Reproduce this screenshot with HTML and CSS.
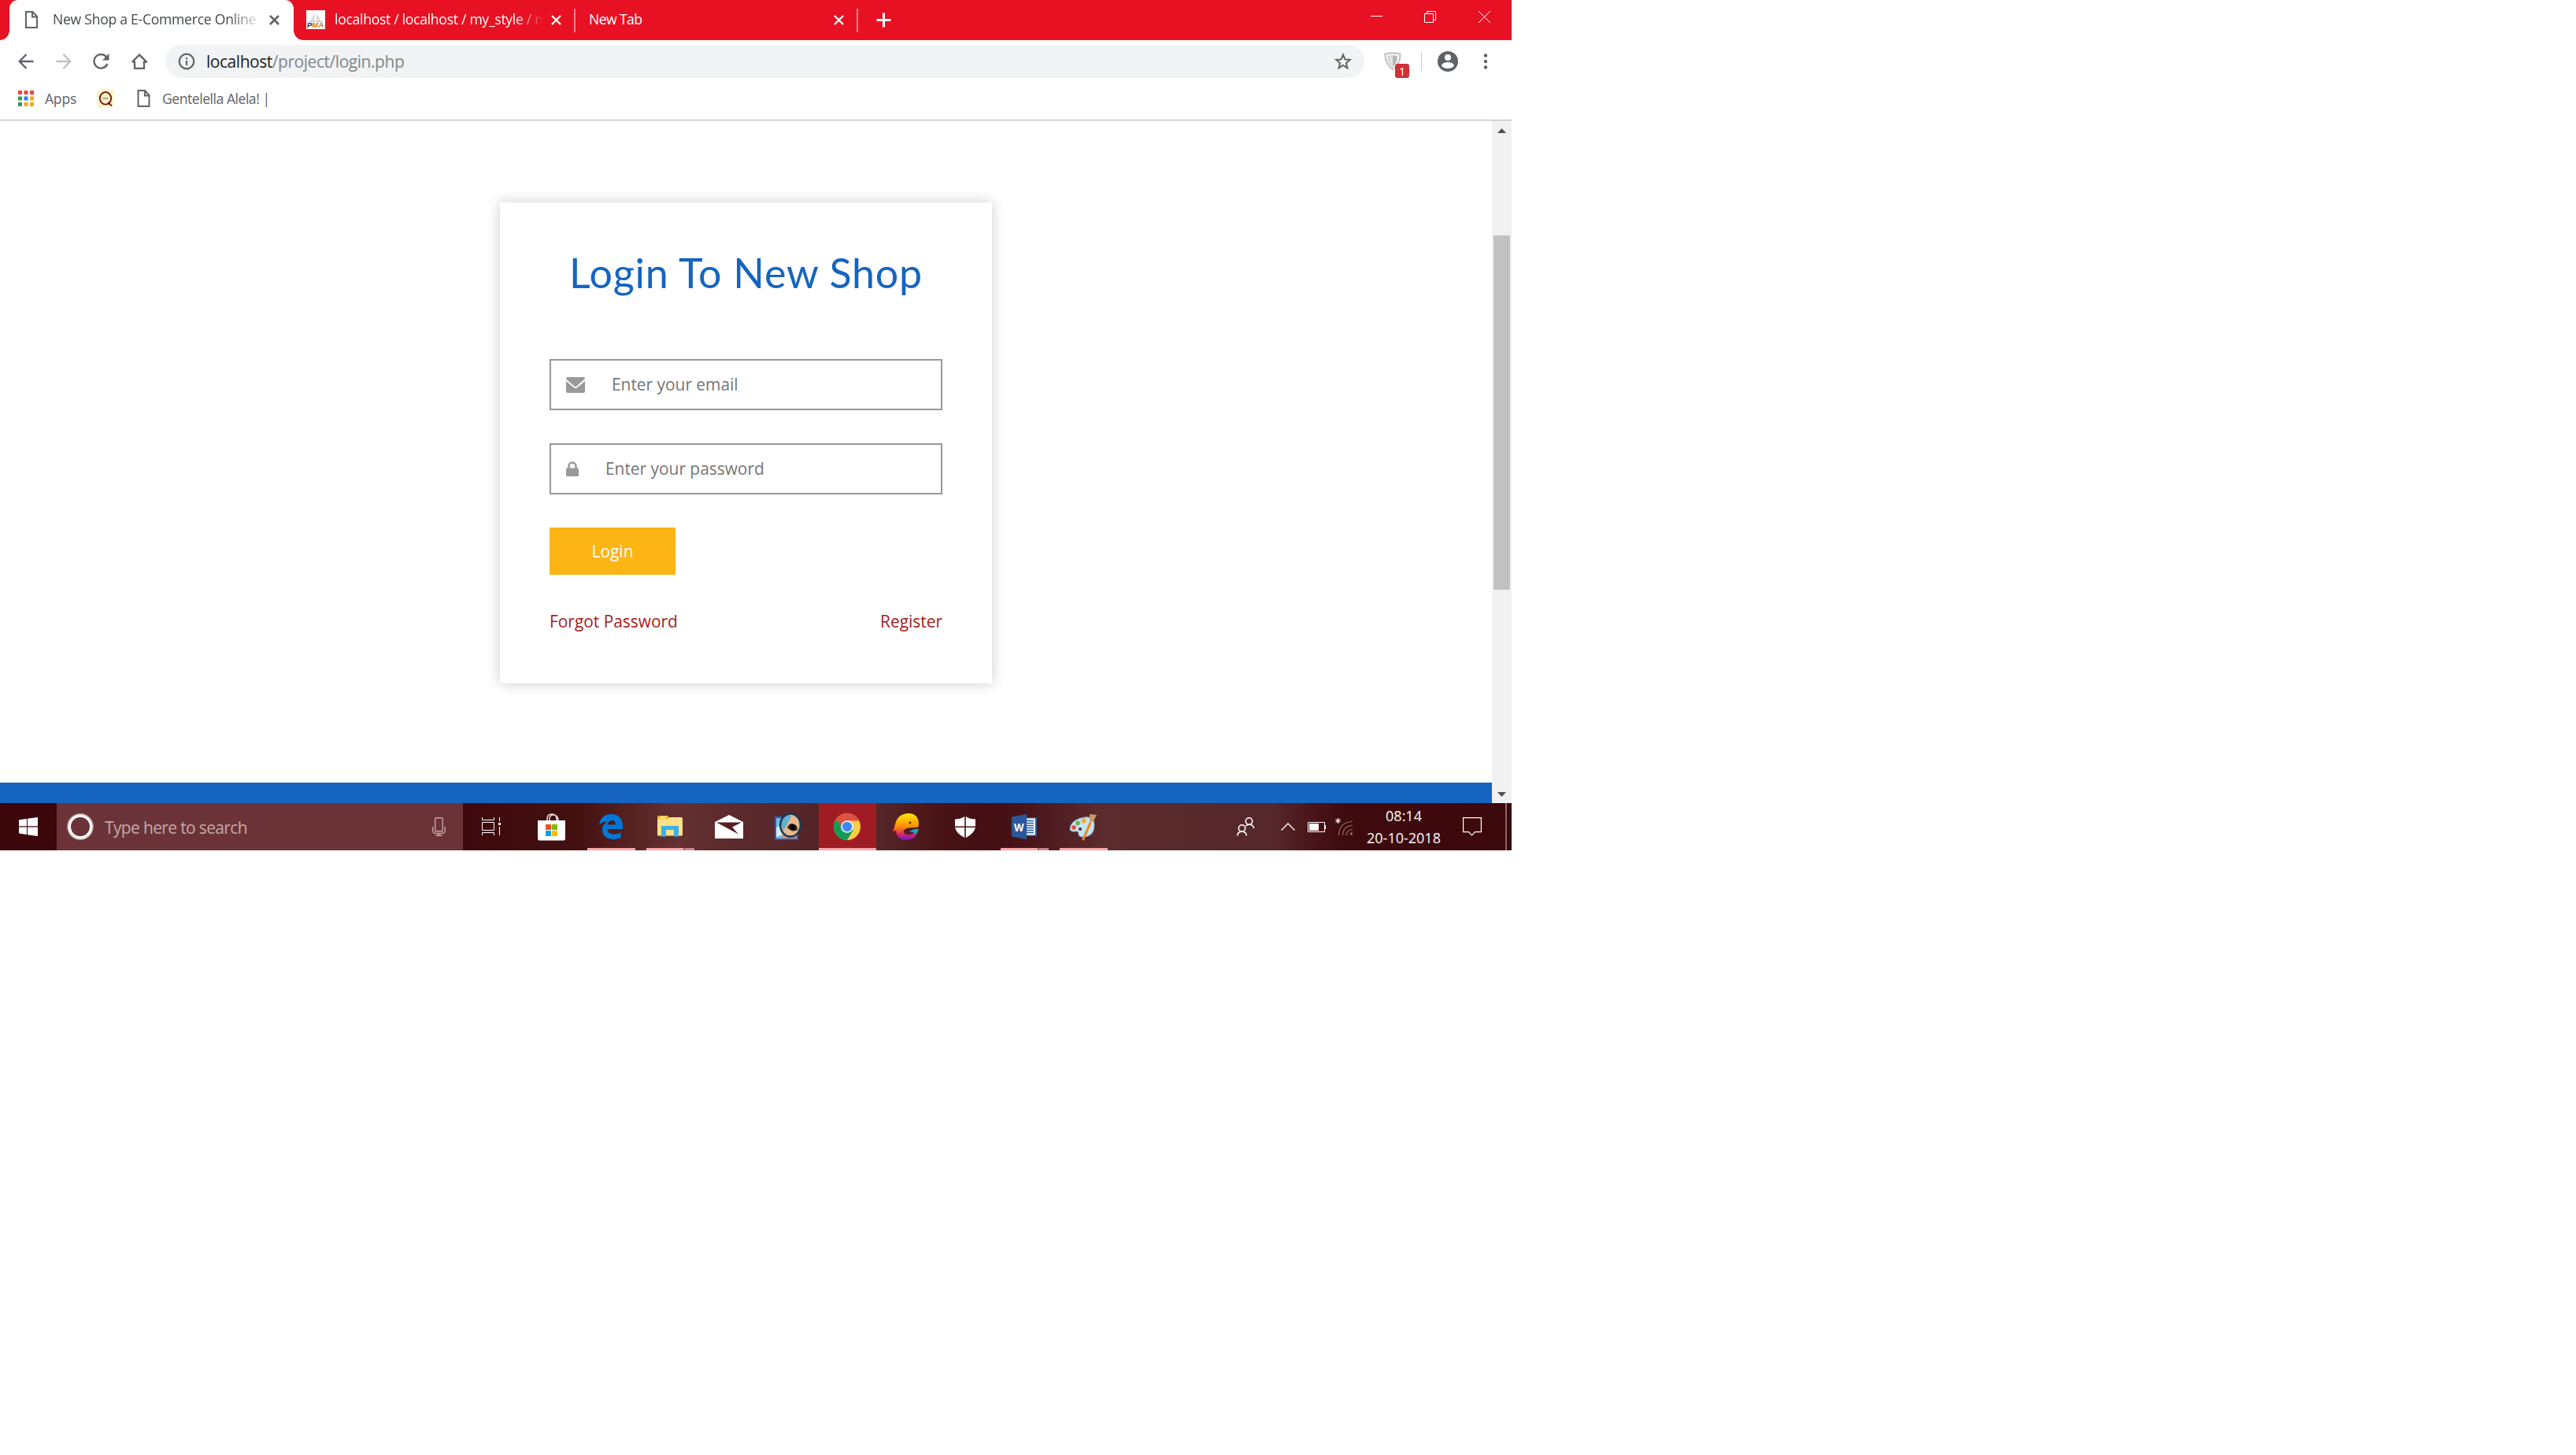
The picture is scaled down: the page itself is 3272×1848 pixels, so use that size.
FILE: index.html
```html
<!DOCTYPE html>
<html lang="en">
<head>
<meta charset="utf-8">
<title>New Shop a E-Commerce Online</title>
<link rel="stylesheet" href="styles.css">
</head>
<body>
<div class="desktop">
  <header class="tabstrip">
    <div class="tab tab-active">
      <svg class="tab-icon" width="24" height="24" viewBox="0 0 24 24" fill="none" stroke="#5f6368" stroke-width="2"><path d="M5 2h8.500l5.500 6v14H5zM13 2.500V8.500h5.500"/></svg>
      <span class="tab-title t1">New Shop a E-Commerce Online</span>
      <svg class="tab-close" width="13" height="13" viewBox="0 0 13 13" stroke="#5f6368" stroke-width="2.600"><path d="M1 1l11 11M12 1L1 12"/></svg>
    </div>
    <div class="tab tab-second">
      <svg class="tab-icon" width="24" height="24" viewBox="0 0 24 24"><path fill="#fff" d="M0 0h24v24H0z"/><path fill="#ddd" d="M10 2l1 13H3q5-5 7-13zM13 4q5 6 6 12l-6-1z"/><path fill="#c4c4c4" d="M2 14h20l-2 1H3z"/><text x="1" y="22" font-family="Liberation Sans" font-weight="bold" font-style="italic" font-size="8.500" textLength="21" lengthAdjust="spacingAndGlyphs" fill="#222b45">P<tspan fill="#d07a10">MA</tspan></text></svg>
      <span class="tab-title t2">localhost / localhost / my_style / n</span>
      <svg class="tab-close" width="13" height="13" viewBox="0 0 13 13" stroke="#fff" stroke-width="2.400"><path d="M1 1l11 11M12 1L1 12"/></svg>
    </div>
    <div class="tab tab-third">
      <span class="tab-title t3">New Tab</span>
      <svg class="tab-close" width="13" height="13" viewBox="0 0 13 13" stroke="#fff" stroke-width="2.400"><path d="M1 1l11 11M12 1L1 12"/></svg>
    </div>
    <svg class="tab-new" width="19" height="19" viewBox="0 0 19 19" stroke="#fff" stroke-width="3"><path d="M9.500 0.500v18M0.500 9.500h18"/></svg>
    <div class="window-buttons">
      <svg width="16" height="15" viewBox="0 0 16 15" stroke="#fff"><path d="M1 6.500h15"/></svg>
      <svg width="15" height="15" viewBox="0 0 15 15" stroke="#fff" fill="none"><path d="M.5 3.500h11v11H.5zM3.500 3.500V.5h11v11h-3"/></svg>
      <svg width="15" height="15" viewBox="0 0 15 15" stroke="#fff"><path d="M0 0l15 15M15 0L0 15"/></svg>
    </div>
  </header>

  <div class="toolbar">
    <div class="nav-buttons">
      <svg width="20" height="20" viewBox="0 0 20 20" fill="none" stroke="#5f6368" stroke-width="2.300"><path d="M19.500 10H2M10.500 1L1.700 10l8.800 9"/></svg>
      <svg width="20" height="20" viewBox="0 0 20 20" fill="none" stroke="#bdbfc1" stroke-width="2.300"><path d="M.5 10H18M9.500 1l8.800 9-8.800 9"/></svg>
      <svg width="21" height="20" viewBox="0 0 21 20" fill="none" stroke="#5f6368" stroke-width="2.300"><path d="M17.500 4.800A8.800 8.800 0 1 0 18.500 13"/><path d="M20.500 0v8.500H12z" fill="#5f6368" stroke="none"/></svg>
      <svg width="20" height="20" viewBox="0 0 20 20" fill="none" stroke="#5f6368" stroke-width="2.300"><path d="M4 9.500V18.800h12V9.500M1 10.500L10 1.600l9 8.900H16M1 10.500h3"/></svg>
    </div>
    <div class="omnibox">
      <svg width="22" height="22" viewBox="0 0 22 22" fill="none" stroke="#5f6368" stroke-width="2.200"><circle cx="11" cy="11" r="9.300"/><path d="M11 10v6M11 6v2.300"/></svg>
      <span class="url"><b>localhost</b>/project/login.php</span>
      <svg class="star" width="22" height="22" viewBox="0 0 22 22" fill="none" stroke="#5f6368" stroke-width="2"><path d="M11 2.500l2.400 5.900 6.400.5-4.900 4.100 1.500 6.300L11 16l-5.400 3.300 1.500-6.300L2.200 8.900l6.400-.5z"/></svg>
    </div>
    <div class="extension">
      <svg width="22" height="24" viewBox="0 0 22 24"><path d="M1.500 2.500Q11 .5 20.500 2.500q0 13-9.500 19.500Q1.500 15.500 1.500 2.500z" fill="#fff" stroke="#c8c8c8" stroke-width="2.500"/><path d="M5.500 5.500Q11 4 16.500 5.500q0 8.500-5.500 13Q5.500 14 5.500 5.500z" fill="#e3e3e3" stroke="#bbb"/><path d="M11 5v13q5-4.500 5-12z" fill="#b5b5b5"/></svg>
      <span class="badge">1</span>
    </div>
    <i class="toolbar-rule"></i>
    <svg class="avatar" width="26" height="26" viewBox="0 0 26 26"><circle cx="13" cy="13" r="13" fill="#5f6368"/><circle cx="13" cy="8" r="4" fill="#fff"/><ellipse cx="13" cy="18" rx="7.800" ry="4" fill="#fff"/></svg>
    <svg class="menu" width="6" height="20" viewBox="0 0 6 20" fill="#5f6368"><circle cx="3" cy="2.500" r="2.200"/><circle cx="3" cy="10" r="2.200"/><circle cx="3" cy="17.500" r="2.200"/></svg>
  </div>

  <div class="bookmarks">
    <svg width="20" height="20" viewBox="0 0 20 20"><path fill="#f44336" d="M0 0h5v5H0zM7.500 0h5v5h-5zM15 0h5v5h-5z"/><path fill="#34a058" d="M0 7.500h5v5H0zM0 15h5v5H0z"/><path fill="#1e88f5" d="M7.500 7.500h5v5h-5z"/><path fill="#f7a813" d="M15 7.500h5v5h-5zM7.500 15h5v5h-5zM15 15h5v5h-5z"/></svg>
    <span class="apps">Apps</span>
    <svg class="quick" width="24" height="24" viewBox="0 0 24 24"><path fill="#fdf6c4" d="M1 2l22-2-1 22L2 24z"/><ellipse cx="12" cy="11.800" rx="7.200" ry="7.800" fill="none" stroke="#7b1216" stroke-width="1.900"/><path d="M15 17l5 4.500" stroke="#7b1216" stroke-width="1.800"/><path d="M8.500 12h7" stroke="#b9b08a" stroke-width="2.500"/></svg>
    <svg class="page" width="17" height="22" viewBox="0 0 17 22" fill="none" stroke="#5f6368" stroke-width="2"><path d="M1.500 1H10l5.500 6v14h-14zM10 1.500V7.500h5.500"/></svg>
    <span class="gent">Gentelella Alela! |</span>
  </div>

  <div class="viewport">
    <main class="page-area">
      <section class="login-card">
        <h1>Login To New Shop</h1>
        <div class="field">
          <svg width="24" height="20" viewBox="0 0 24 20" fill="#999"><path d="M2 0h20q2 0 2 2L13.500 11.500q-1.500 1.200-3 0L0 2.500Q0 0 2 0z"/><path d="M0 5l9.500 8q2.500 2 5 0L24 5v13q0 2-2 2H2q-2 0-2-2z"/></svg>
          <span class="email">Enter your email</span>
        </div>
        <div class="field">
          <svg width="16" height="19" viewBox="0 0 16 19"><path d="M3.500 9V6a4.500 4.500 0 0 1 9 0v3" fill="none" stroke="#999" stroke-width="2.600"/><rect y="8.500" width="16" height="10.500" rx="1.500" fill="#999"/></svg>
          <span class="pass">Enter your password</span>
        </div>
        <div class="login-button"><span>Login</span></div>
        <div class="links"><a class="forgot">Forgot Password</a><a class="register">Register</a></div>
      </section>
      <div class="footer-band"></div>
    </main>
    <aside class="scrollbar">
      <svg width="11" height="6" viewBox="0 0 11 6"><path fill="#505050" d="M0 6L5.500 0 11 6z"/></svg>
      <div class="thumb"></div>
      <svg width="11" height="6" viewBox="0 0 11 6"><path fill="#505050" d="M0 0h11L5.500 6z"/></svg>
    </aside>
  </div>

  <footer class="taskbar">
    <div class="start"><svg width="24" height="24" viewBox="0 0 24 24" fill="#fff"><path d="M0 3.300l10-1.400V11.300H0zM11 1.700L24 0v11.300H11zM0 12.400h10v9.500L0 20.600zM11 12.400h13V24l-13-1.800z"/></svg></div>
    <div class="search">
      <svg width="34" height="34" viewBox="0 0 34 34" fill="none"><circle cx="17" cy="17" r="14.400" stroke="#b99a9c" stroke-width="5"/><circle cx="17" cy="17" r="13.800" stroke="#fff" stroke-width="3.200"/></svg>
      <span class="hint">Type here to search</span>
      <svg class="mic" width="17" height="24" viewBox="0 0 17 24" fill="none" stroke="#c3a5a7" stroke-width="1.400"><rect x="3.700" y=".7" width="9.600" height="17" rx="1.500"/><path d="M.7 12v4q0 4.500 4 4.500h7.600q4 0 4-4.500v-4M8.500 20.500v3M4.500 23.300h8"/></svg>
    </div>
    <div class="apps-row">
      <div class="task task-view"><svg width="25" height="24" viewBox="0 0 25 24" fill="none" stroke="#fff"><path d="M.5 0v3.500h15V0M.5 6.500h15v10H.5zM.5 23v-3.500h15V23M22.500 0v5M22.500 12v11"/><path d="M21 7h3v3h-3z" fill="#fff" stroke="none"/></svg></div>
      <div class="task"><svg width="35" height="35" viewBox="0 0 35 35"><path d="M12 10V7q0-6 6-6t6 6v3M15 10V7q0-5 5-5t6 6v2" fill="none" stroke="#e6d8d8" stroke-width="1.600"/><path fill="#fff" d="M0 9h35v24l-1.500 1.500h-32L0 33z"/><path fill="#f25022" d="M10 14h7v7h-7z"/><path fill="#7fba00" d="M18 14h7v7h-7z"/><path fill="#00a4ef" d="M10 22h7v7h-7z"/><path fill="#ffb900" d="M18 22h7v7h-7z"/></svg></div>
      <div class="task"><svg width="30" height="32" viewBox="0 0 30 32"><path fill="#0078d7" fill-rule="evenodd" d="M0 14C1 5 7 0 15.500 0 24 0 30 6 30 14.500V19H10.500c.2 4.500 4 6.500 8.500 6.500 3 0 5.800-.8 8.500-2.300V30c-3 1.500-6.500 2-10 2C9.500 32 4 27 4 20c0-5 2.600-8.500 6.500-10.500C6 9.500 2.500 11 0 14zM10.700 13.500h10.500C21.200 10 19.500 8 16.500 8S11 10.500 10.700 13.500z"/></svg><i class="line"></i></div>
      <div class="task"><svg width="32" height="28" viewBox="0 0 32 28"><path fill="#f6b929" d="M0 2Q0 0 2 0h11l1.500 2L13 5H0z"/><path fill="#ffe08a" d="M0 4h13l2-2h15q2 0 2 2v20q0 1.500-1.500 1.500h-29Q0 25.500 0 24z"/><path fill="#fff" d="M4 1.500h6v1.700H4z"/><path fill="#39b1e8" d="M5 13h22v13.500h-6V18H11v8.500H5z"/></svg><i class="line line-split"></i></div>
      <div class="task"><svg width="36" height="30" viewBox="0 0 36 30"><path fill="#fff" d="M0 9L18 0l18 9v21H0z"/><path fill="#551f22" d="M2 9.500h32L22 15.500l8 9z"/></svg></div>
      <div class="task"><svg width="36" height="36" viewBox="0 0 36 36"><path fill="#3454c8" d="M1 5h30v30H1z"/><path fill="#69bddd" d="M3 7h26v26H3z"/><path fill="#d5edf0" d="M3 19l11-5 4 12-15 5z"/><path fill="#c99563" d="M10 33q0-12 9-18l10 4v14z"/><ellipse cx="21" cy="16" rx="12.500" ry="14.500" fill="#e5b98b"/><path fill="#63b1cc" d="M9 15Q10 2 20 2l2 3q-6 12-10 18z"/><path fill="#3b2116" d="M17 19q4-9 12-2l1 5q-7 4-13-3z"/><circle cx="24" cy="18.500" r="3.500" fill="#0a0a10"/><ellipse cx="21" cy="16" rx="12.800" ry="14.600" fill="none" stroke="#183857" stroke-width="2.500"/></svg></div>
      <div class="task task-chrome"><svg width="34" height="34" viewBox="0 0 34 34"><circle cx="17" cy="17" r="17" fill="#ffce44"/><path fill="#0f9d58" d="M17 17L2.300 8.500A17 17 0 0 0 17 34l8-13z"/><path fill="#dd5144" d="M2.800 7.600A17 17 0 0 1 32.200 9.500H17l-7.500 11z"/><path fill="#0f9d58" d="M2.800 7.600L9.700 20l7.300 4z"/><circle cx="17" cy="17" r="7.800" fill="#f3f6fb"/><circle cx="17" cy="17" r="6.200" fill="#4285f4"/></svg><i class="line"></i></div>
      <div class="task"><svg width="34" height="34" viewBox="0 0 34 34"><defs><linearGradient id="whale" x1="0" y1="0" x2="0" y2="1"><stop offset="0" stop-color="#ffe800"/><stop offset=".5" stop-color="#fb8c0c"/><stop offset=".75" stop-color="#e52a5e"/><stop offset="1" stop-color="#6c14d2"/></linearGradient></defs><path fill="url(#whale)" d="M0 23Q2 19 3 14 6 0 21 0 33 1 33 14q0 4-3 4-7 0-12 1-5 2-4 5 2 4 7 3 4 0 6-3l3 3q-3 7-12 7-13 0-14-12z"/><path fill="#14a7bd" d="M21 23q6-4 12-3-1 5-4 7 0-3-8-4z"/><circle cx="22" cy="12" r="1.400" fill="#553508"/></svg></div>
      <div class="task"><svg width="26" height="27" viewBox="0 0 26 27"><path fill="#fff" d="M0 3.500Q7 3.500 12.200 0v12.400H0zM13.800 0Q19 3.500 26 3.500v8.900H13.800zM0 14h12.200v13Q2 22 0 14zM13.800 14H26q-2 8-12.200 13z"/></svg></div>
      <div class="task"><svg width="32" height="32" viewBox="0 0 32 32"><path fill="#2b579a" d="M17 4h15v24H17z"/><path fill="#fff" d="M18 5.500h12v21H18z"/><path stroke="#2b579a" stroke-width="1.300" d="M19 8.500h9M19 11.500h9M19 14.500h9M19 17.500h9M19 20.500h9M19 23.500h9"/><path fill="#2b579a" d="M0 3.500L19 0v32L0 28.500z"/><text x="3" y="22" font-family="Open Sans, sans-serif" font-weight="bold" font-size="15" textLength="12.500" lengthAdjust="spacingAndGlyphs" fill="#fff">W</text></svg><i class="line line-split"></i></div>
      <div class="task"><svg width="35" height="35" viewBox="0 0 35 35"><path fill="#c6e2ef" stroke="#84aec3" d="M15 6q17-5 17 9 0 15-15 15-5 0-5-4t-4-3-7-2Q1 10 15 6z"/><circle cx="6" cy="18" r="2.800" fill="#e34a3a"/><circle cx="11" cy="12.500" r="2.800" fill="#59b947"/><circle cx="18.500" cy="9.500" r="3" fill="#f6ae28"/><circle cx="14" cy="20" r="2" fill="#4d2b30"/><path d="M18 33l9-21" stroke="#e88722" stroke-width="3" stroke-linecap="round"/><path fill="#c49a6d" d="M26 1l9 1-4 8q-5 2-5-2z"/></svg><i class="line"></i></div>
    </div>
    <div class="tray">
      <svg class="people" width="23" height="24" viewBox="0 0 23 24" fill="none" stroke="#fff" stroke-width="1.600"><circle cx="15.500" cy="5" r="4.200"/><circle cx="6.500" cy="14" r="4.200"/><path d="M.8 23.500q0-5.300 5.700-5.300t5.700 5.300M11.500 11q1.500-1.800 4-1.800 5.700 0 6.200 5"/></svg>
      <svg class="chevron" width="18" height="10" viewBox="0 0 18 10" fill="none" stroke="#fff" stroke-width="1.300"><path d="M.5 9.500L9 1l8.500 8.500"/></svg>
      <svg class="battery" width="23" height="13" viewBox="0 0 23 13"><path fill="none" stroke="#fff" d="M.5.500h21v12H.5z"/><path fill="#fff" d="M2 2h12v9H2zM22 4h1v5h-1z"/></svg>
      <svg class="wifi" width="23" height="22" viewBox="0 0 23 22" fill="none" stroke="#8f6c6e" stroke-width="1.200"><path d="M4.500 22Q5 5 22 4.500M9.500 22Q10 10 22 9.500M14 22Q14.500 15 22 14.500"/><circle cx="20.500" cy="20" r="1.200" fill="#8f6c6e"/><path stroke="#fff" d="M3.500 0v7M.5 1.700l6 3.600M6.500 1.700l-6 3.600"/></svg>
      <div class="clock"><span class="time">08:14</span><span class="date">20-10-2018</span></div>
      <svg class="notice" width="24" height="24" viewBox="0 0 24 24" fill="none" stroke="#fff" stroke-width="1.200"><path d="M.6.600h22.800v18H15.500L11.500 22.800 7.500 18.600H.6z"/></svg>
      <i class="peek"></i>
    </div>
  </footer>
</div>
</body>
</html>
```
FILE: styles.css
```css
* { box-sizing: border-box; }
body { margin: 0; background: #fff; font-family: "Open Sans", "Noto Sans", sans-serif; }
svg { display: block; flex: none; }
span, a { white-space: nowrap; }

.desktop { width: 1920px; height: 1080px; display: flex; flex-direction: column; }

.tabstrip { height: 51px; background: #e81123; display: flex; align-items: center; padding-left: 12px; flex: none; }
.tab { height: 51px; display: flex; align-items: center; color: #fff; font-size: 17.600px; padding-bottom: 1px; }
.tab-active { position: relative; width: 361px; background: #fff; color: #45494d; border-radius: 11px 11px 0 0; padding-left: 16px; }
.tab-active::before, .tab-active::after { content: ""; position: absolute; bottom: 0; width: 12px; height: 12px; }
.tab-active::before { left: -12px; background: radial-gradient(circle at 0 0, #e81123 11.500px, #fff 12px); }
.tab-active::after { right: -12px; background: radial-gradient(circle at 100% 0, #e81123 11.500px, #fff 12px); }
.tab-title { padding-bottom: 2px; }
.t1 { width: 275px; margin-left: 15px; letter-spacing: -.27px; mask-image: linear-gradient(90deg, #000 225px, transparent 266px); }
.tab-second { width: 358px; padding-left: 16px; }
.t2 { width: 275px; margin-left: 12px; letter-spacing: -.3px; mask-image: linear-gradient(90deg, #000 230px, transparent 266px); }
.tab-third { width: 359px; padding-left: 17px; justify-content: space-between; padding-right: 18px; }
.t3 { letter-spacing: -.6px; }
.tab-second, .tab-third { background: linear-gradient(#f3868f, #f3868f) right center / 2px 30px no-repeat; }
.tab-new { margin-left: 23px; }
.window-buttons { display: flex; gap: 54px; margin-left: auto; margin-right: 27px; padding-bottom: 8px; }
.window-buttons svg:first-child { margin-right: -1px; }

.toolbar { height: 54px; display: flex; align-items: center; padding-left: 23px; flex: none; }
.nav-buttons { display: flex; gap: 27.500px; width: 187px; }
.omnibox { width: 1523px; height: 42px; border-radius: 21px; background: #f1f3f4; display: flex; align-items: center; padding: 0 16px; }
.url { font-size: 21px; letter-spacing: -.46px; color: #80868b; margin-left: 14px; }
.url b { font-weight: 400; color: #202124; }
.star { margin-left: auto; }
.extension { position: relative; margin-left: 25px; width: 32px; }
.badge { position: absolute; left: 14px; top: 15px; width: 18px; height: 18px; border-radius: 3px; background: #cf3035; color: #fff; font-size: 14px; line-height: 20px; text-align: center; }
.toolbar-rule { width: 1px; height: 24px; background: #ccc; margin-left: 15px; }
.avatar { margin-left: 20px; }
.menu { margin-left: 32px; }

.bookmarks { height: 48px; border-bottom: 1px solid #b3b3b3; display: flex; align-items: center; padding: 0 0 7px 23px; font-size: 17.600px; letter-spacing: -.25px; color: #5f6368; flex: none; }
.apps { margin-left: 14px; width: 65px; }
.page { margin-left: 28px; }
.gent { margin-left: 15px; letter-spacing: -.48px; }

.viewport { height: 867px; display: flex; flex: none; }
.page-area { width: 1895px; display: flex; flex-direction: column; align-items: center; justify-content: space-between; padding-top: 104px; }
.login-card { width: 625px; height: 611px; padding: 62px 63px 0 63px; box-shadow: 0 0 16px rgba(0, 0, 0, .2); font-size: 20.900px; }
h1 { margin: 0 0 75px; height: 62px; white-space: nowrap; text-align: center; color: #1565c0; font: 400 52px/54px Lato, sans-serif; letter-spacing: .75px; }
.field { height: 65px; border: 2px solid #999; display: flex; align-items: center; padding-left: 19px; color: #757575; margin-bottom: 42px; }
.field span { margin-left: 34px; padding-bottom: 2px; }
.login-button { width: 160px; height: 60px; background: #fdb515; color: #fff; display: flex; align-items: center; justify-content: center; padding-bottom: 1px; }
.links { display: flex; justify-content: space-between; color: #a61c1c; margin-top: 45px; line-height: 28px; }
.footer-band { align-self: stretch; height: 26px; background: #1565c0; }
.scrollbar { width: 25px; background: #f1f1f1; display: flex; flex-direction: column; align-items: center; padding: 10px 0 8px; }
.thumb { width: 21px; height: 450px; margin: 130px 0 auto; background: #c1c1c1; }

.taskbar { height: 60px; display: flex; flex: none; background: linear-gradient(90deg, #3b070b 0, #3d090c 600px, #44100f 730px, #643031 860px, #5a292b 950px, #542527 1040px, #552628 1120px, #4b1618 1180px, #440e12 1260px, #481418 1300px, #5b2b2e 1400px, #592a2c 1500px, #55262a 1620px, #4b171b 1660px, #3f0a0e 1710px, #3b080c 1920px); }
.start { width: 72px; display: flex; align-items: center; justify-content: center; }
.search { width: 516px; background: #6b3338; display: flex; align-items: center; padding-left: 13px; color: #c3a9ab; }
.hint { font-size: 21px; letter-spacing: -.65px; margin-left: 14px; padding-top: 2px; }
.mic { margin-left: auto; margin-right: 22px; }
.apps-row { display: flex; }
.task { position: relative; width: 73px; margin-left: 2px; padding-right: 2px; display: flex; align-items: center; justify-content: center; }
.task-view { padding-right: 4px; }
.task-chrome { background: #a01c24; }
.line { position: absolute; bottom: 0; left: 6px; right: 6px; height: 3px; background: #ffa3ab; }
.task-chrome .line { left: 0; right: 0; }
.line-split { background: linear-gradient(90deg, #ffa3ab 47px, #9b6468 47px, #9b6468 49px, #cf8289 49px); }
.tray { flex: 1; display: flex; align-items: center; color: #fff; }
.people { margin-left: 158px; }
.chevron { margin-left: 33px; }
.battery { margin-left: 16px; }
.wifi { margin-left: 12px; }
.clock { width: 100px; margin-left: 14px; display: flex; flex-direction: column; align-items: center; font-size: 18px; line-height: 28px; }
.notice { margin-left: 25px; }
.peek { width: 2px; height: 60px; margin-left: 30px; background: #8a676b; }
```
